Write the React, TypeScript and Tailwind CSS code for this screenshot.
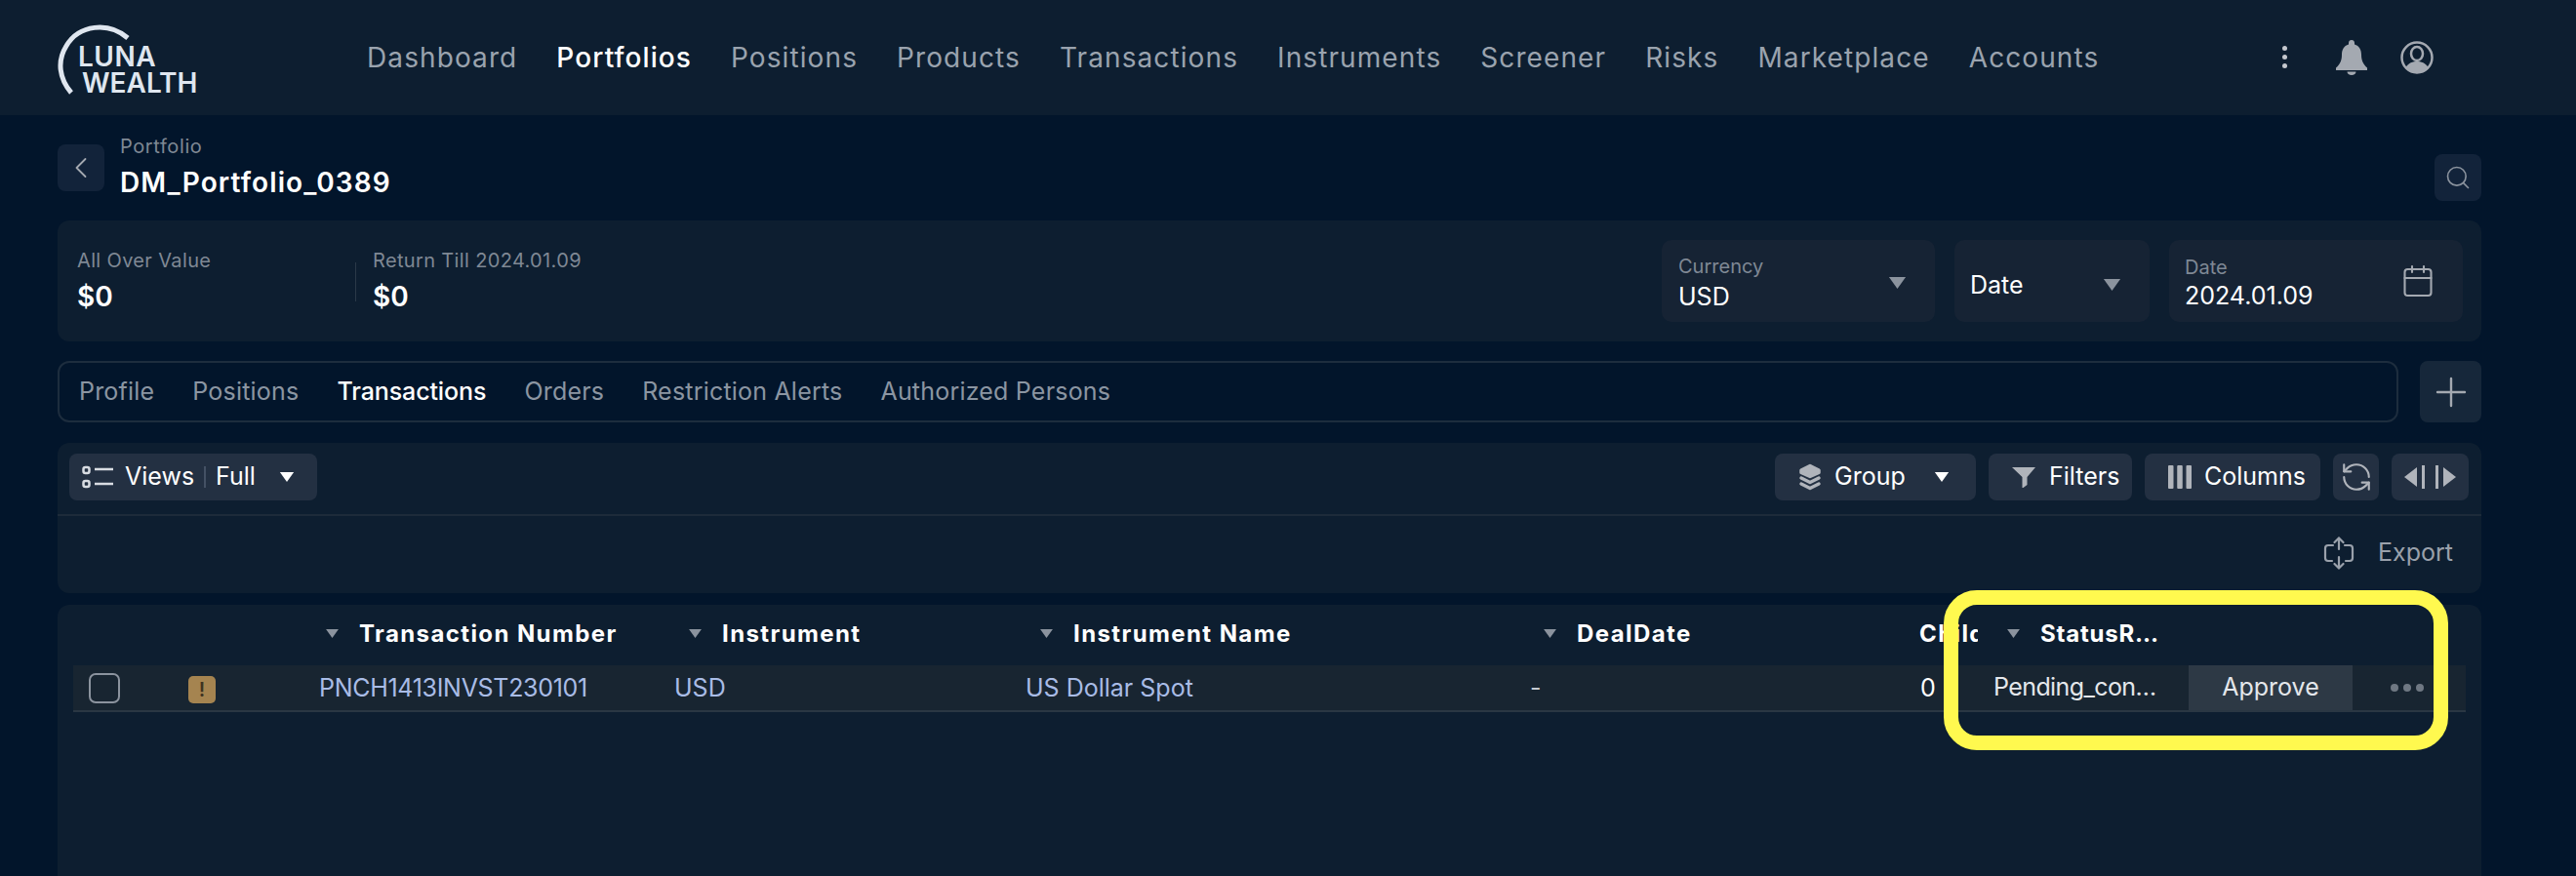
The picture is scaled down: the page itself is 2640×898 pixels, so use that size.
import { ChevronLeft, Search, Calendar, RefreshCcw, Plus } from "lucide-react";

const NAV = ["Dashboard", "Portfolios", "Positions", "Products", "Transactions", "Instruments", "Screener", "Risks", "Marketplace", "Accounts"];
const TABS = ["Profile", "Positions", "Transactions", "Orders", "Restriction Alerts", "Authorized Persons"];

const Caret = ({ className }: { className: string }) => (
  <svg viewBox="0 0 10 7" className={className} fill="currentColor">
    <path d="M0 0h10L5 7z" />
  </svg>
);

const Logo = () => (
  <div className="relative w-[150px] h-[80px] text-[#dfe6ef] font-semibold text-[28px] leading-[27px]">
    <svg viewBox="0 0 150 80" className="absolute left-0 top-0 w-[150px] h-[80px]" fill="none">
      <path d="M72 20C52 3 22 6 9 28C-1 44 2 62 14 76" stroke="#dfe6ef" strokeWidth="5" />
    </svg>
    <div className="pl-[21px] pt-[26px] tracking-[0.5px]">LUNA</div>
    <div className="pl-[25px]">WEALTH</div>
  </div>
);

const TopBar = () => (
  <header className="h-[118px] bg-[#0d1e30] flex items-center pl-[59px] pr-[146px] pb-[1px]">
    <div className="w-[317px] pt-[1px] shrink-0">
      <Logo />
    </div>
    <nav className="flex gap-[40px] text-[28px] tracking-[1.1px] text-[#9aa3ae]">
      {NAV.map((n) => (
        <span key={n} className={n === "Portfolios" ? "text-white font-medium" : ""}>
          {n}
        </span>
      ))}
    </nav>
    <div className="ml-auto flex items-center text-[#a4a9b1]">
      <div className="flex flex-col gap-[4px] mr-[49px]">
        <i className="w-[5px] h-[5px] rounded-full bg-[#c4c8ce]" />
        <i className="w-[5px] h-[5px] rounded-full bg-[#c4c8ce]" />
        <i className="w-[5px] h-[5px] rounded-full bg-[#c4c8ce]" />
      </div>
      <svg viewBox="0 0 34 36" className="w-[34px] h-[36px] mr-[33px]" fill="currentColor">
        <path d="M17 0c1.800 0 3 1.300 3 3v1.500c5 1.500 7 5.500 7 10.500 0 6 2 10 6 13.500V31H1v-2.500C5 25 7 21 7 15c0-5 2-9 7-10.500V3c0-1.700 1.200-3 3-3z" />
        <path d="M12.500 32.500h9c0 2-2 3.500-4.500 3.500s-4.500-1.500-4.500-3.500z" />
      </svg>
      <svg viewBox="0 0 34 34" className="w-[34px] h-[34px]" fill="none">
        <circle cx="17" cy="17" r="15.500" stroke="currentColor" strokeWidth="2.500" />
        <ellipse cx="17" cy="13" rx="6" ry="7" stroke="currentColor" strokeWidth="2.500" />
        <path d="M5 28c3-6 8-7 12-7s9 1 12 7c-3 3-7 5-12 5s-9-2-12-5z" fill="currentColor" />
      </svg>
    </div>
  </header>
);

const TitleRow = () => (
  <div className="h-[108px] flex items-start">
    <button className="mt-[30px] w-[48px] h-[48px] rounded-[8px] bg-[#12233a] flex items-center justify-center text-[#a4a9b1]">
      <ChevronLeft size={36} strokeWidth={1.2} />
    </button>
    <div className="ml-[16px] mt-[19px]">
      <div className="text-[20px] leading-[26px] tracking-[0.6px] text-[#7f8894]">Portfolio</div>
      <div className="text-[28px] leading-[36px] mt-[6px] font-semibold tracking-[1.1px] text-white">DM_Portfolio_0389</div>
    </div>
    <button className="ml-auto mt-[40px] w-[48px] h-[48px] rounded-[8px] bg-[#12233a] flex items-center justify-center text-[#8b939e]">
      <Search size={28} strokeWidth={1.4} />
    </button>
  </div>
);

const StatsPanel = () => (
  <section className="h-[124px] rounded-[12px] bg-[#0d1e30] flex items-center pl-[20px] pr-[19px]">
    <div className="w-[285px]">
      <div className="text-[20px] leading-[26px] tracking-[0.35px] text-[#7f8894]">All Over Value</div>
      <div className="text-[28px] leading-[36px] mt-[6px] font-semibold text-white">$0</div>
    </div>
    <div className="w-[1px] h-[40px] bg-[#2a3948] mr-[17px] mt-[2px]" />
    <div>
      <div className="text-[20px] leading-[26px] tracking-[0.35px] text-[#7f8894]">Return Till 2024.01.09</div>
      <div className="text-[28px] leading-[36px] mt-[6px] font-semibold text-white">$0</div>
    </div>
    <div className="ml-auto flex gap-[20px]">
      <div className="w-[280px] h-[84px] rounded-[10px] bg-[#162334] flex items-center pl-[17px] pr-[29px]">
        <div className="pt-[3px]">
          <div className="text-[20px] leading-[26px] text-[#7f8894]">Currency</div>
          <div className="text-[25px] leading-[32px] mt-[2px] text-white">USD</div>
        </div>
        <Caret className="ml-auto mt-[3px] w-[19px] h-[12px] text-[#8b939e]" />
      </div>
      <div className="w-[200px] h-[84px] rounded-[10px] bg-[#162334] flex items-center pl-[16px] pr-[29px]">
        <div className="text-[25px] pt-[10px] text-white">Date</div>
        <Caret className="ml-auto mt-[7px] w-[19px] h-[12px] text-[#8b939e]" />
      </div>
      <div className="w-[301px] h-[84px] rounded-[10px] bg-[#162334] flex items-center pl-[16px] pr-[28px]">
        <div className="pt-[4px]">
          <div className="text-[20px] leading-[26px] text-[#7f8894]">Date</div>
          <div className="text-[25px] leading-[32px] text-white">2024.01.09</div>
        </div>
        <Calendar className="ml-auto text-[#a4a9b1]" size={36} strokeWidth={1.4} />
      </div>
    </div>
  </section>
);

const TabsRow = () => (
  <div className="mt-[20px] h-[63px] flex gap-[22px]">
    <div className="flex-1 rounded-[12px] border-2 border-[#1d2d3e] flex items-center gap-[39px] pl-[20px] text-[25px] tracking-[0.2px] text-[#8b95a2]">
      {TABS.map((t) => (
        <span key={t} className={t === "Transactions" ? "text-white font-medium tracking-[-0.1px]" : ""}>
          {t}
        </span>
      ))}
    </div>
    <button className="w-[63px] rounded-[8px] bg-[#16273a] flex items-center justify-center text-[#a4a9b1]">
      <Plus size={48} strokeWidth={1.2} />
    </button>
  </div>
);

const ToolBtn = ({ children, className }: { children: React.ReactNode; className: string }) => (
  <button className={`h-[48px] rounded-[8px] bg-[#233042] flex items-center text-[25px] text-white ${className}`}>{children}</button>
);

const Toolbar = () => (
  <section className="mt-[21px] h-[154px] rounded-[12px] bg-[#0d1e30]">
    <div className="h-[75px] border-b-2 border-[#1d2b3a] flex items-center pl-[12px] pr-[13px] pb-[3px]">
      <ToolBtn className="w-[254px] pl-[13px]">
        <svg viewBox="0 0 32 24" className="w-[32px] h-[24px] text-[#d8dce2] mr-[12px]" fill="none" stroke="currentColor" strokeWidth="2.500">
          <rect x="1.500" y="2" width="6" height="6" rx="2" />
          <rect x="1.500" y="16" width="6" height="6" rx="2" />
          <path d="M13 4h19M13 19h19" />
        </svg>
        <span>Views</span>
        <i className="w-[2px] h-[22px] bg-[#445164] mx-[10px]" />
        <span>Full</span>
        <Caret className="ml-[24px] w-[16px] h-[10px] text-white" />
      </ToolBtn>
      <ToolBtn className="ml-auto w-[206px] pl-[24px]">
        <svg viewBox="0 0 24 28" className="w-[24px] h-[28px] text-[#b0b4bb] mr-[13px]" fill="none" stroke="currentColor" strokeWidth="3.500" strokeLinecap="round" strokeLinejoin="round">
          <path d="M12 2.500l9 4.500v2.500l-9 4-9-4V7z" fill="currentColor" />
          <path d="M3 15l9 4.500 9-4.500" />
          <path d="M3 21l9 4.500 9-4.500" />
        </svg>
        <span>Group</span>
        <Caret className="ml-[29px] w-[16px] h-[10px] text-white" />
      </ToolBtn>
      <ToolBtn className="ml-[13px] w-[147px] pl-[24px]">
        <svg viewBox="0 0 24 21" className="w-[24px] h-[21px] text-[#b0b4bb] mr-[14px]" fill="currentColor">
          <path d="M0 0h24L15.500 10v8l-4 3h-1V10z" />
        </svg>
        <span>Filters</span>
      </ToolBtn>
      <ToolBtn className="ml-[13px] w-[180px] pl-[24px]">
        <svg viewBox="0 0 24 24" className="w-[24px] h-[24px] text-[#b0b4bb] mr-[13px]" fill="currentColor">
          <rect x="0" width="5.500" height="24" rx="1" />
          <rect x="9.250" width="5.500" height="24" rx="1" />
          <rect x="18.500" width="5.500" height="24" rx="1" />
        </svg>
        <span>Columns</span>
      </ToolBtn>
      <ToolBtn className="ml-[13px] w-[47px] justify-center">
        <RefreshCcw size={34} strokeWidth={1.5} className="text-[#b0b4bb]" />
      </ToolBtn>
      <ToolBtn className="ml-[13px] w-[79px] justify-center">
        <svg viewBox="0 0 53 24" className="w-[53px] h-[24px] text-[#b0b4bb]" fill="currentColor">
          <path d="M13 2v20L0 12z" />
          <rect x="18" width="3" height="24" />
          <rect x="32" width="3" height="24" />
          <path d="M40 2v20l13-10z" />
        </svg>
      </ToolBtn>
    </div>
    <div className="h-[76px] flex items-center justify-end pr-[29px] text-[#9aa1ab] text-[25px]">
      <svg viewBox="0 0 32 34" className="w-[32px] h-[34px] mr-[24px]" fill="none" stroke="currentColor" strokeWidth="2.200" strokeLinecap="round">
        <path d="M16 13V1.500M11.500 6L16 1.500 20.500 6M16 21v11.500M11.500 28l4.500 4.500 4.500-4.500" />
        <path d="M10 9H5a3 3 0 0 0-3 3v10a3 3 0 0 0 3 3h4M22 9h5a3 3 0 0 1 3 3v10a3 3 0 0 1-3 3h-4" />
      </svg>
      <span>Export</span>
    </div>
  </section>
);

const HeadCell = ({ label, className }: { label: string; className: string }) => (
  <div className={`shrink-0 flex items-center ${className}`}>
    <Caret className="w-[13px] h-[9px] mr-[21px] text-[#8b939e] shrink-0" />
    <span>{label}</span>
  </div>
);

const DataTable = () => (
  <section className="mt-[12px] flex-1 rounded-t-[12px] bg-[#0d1e30] pl-[16px] pr-[16px]">
    <div className="h-[62px] pb-[3px] flex items-center text-[24px] font-bold tracking-[1.4px] text-white">
      <div className="w-[243px] shrink-0" />
      <HeadCell label="Transaction Number" className="w-[372px] pl-[16px]" />
      <HeadCell label="Instrument" className="w-[362px] pl-[16px]" />
      <HeadCell label="Instrument Name" className="w-[514px] pl-[14px]" />
      <HeadCell label="DealDate" className="w-[401px] pl-[16px]" />
      <div className="w-[60px] shrink-0 overflow-hidden whitespace-nowrap">Child</div>
      <HeadCell label="StatusR…" className="pl-[30px] tracking-[0.8px]" />
    </div>
    <div className="h-[48px] flex items-center bg-[#182531] border-b-2 border-[#2a3743] text-[25px] text-[#a9bce6]">
      <div className="w-[118px] shrink-0 pl-[16px]">
        <div className="w-[32px] h-[31px] rounded-[7px] border-2 border-[#8b939e]" />
      </div>
      <div className="w-[134px] shrink-0">
        <div className="w-[28px] h-[28px] mt-[4px] rounded-[5px] bg-[#a58450] flex items-center justify-center text-[20px] font-semibold leading-none text-[#3d3320]">!</div>
      </div>
      <div className="w-[364px] shrink-0 pt-[1px] tracking-[-0.3px]">PNCH1413INVST230101</div>
      <div className="w-[360px] shrink-0 pt-[1px]">USD</div>
      <div className="w-[517px] shrink-0 pt-[1px]">US Dollar Spot</div>
      <div className="w-[400px] shrink-0 pt-[1px] text-[#c6cbd2]">-</div>
      <div className="w-[58px] shrink-0 pt-[1px] text-white">0</div>
      <div className="w-[217px] shrink-0 h-full flex items-center pl-[17px] tracking-[-0.6px] text-[#e4e7eb]">Pending_con…</div>
      <div className="w-[168px] shrink-0 h-full flex items-center justify-center bg-[#2d3945] text-[#e4e7eb]">Approve</div>
      <div className="flex-1 flex justify-end gap-[5px] pr-[43px]">
        <i className="w-[8px] h-[8px] rounded-full bg-[#6f7883]" />
        <i className="w-[8px] h-[8px] rounded-full bg-[#6f7883]" />
        <i className="w-[8px] h-[8px] rounded-full bg-[#6f7883]" />
      </div>
    </div>
  </section>
);

export default function App() {
  return (
    <div className="relative h-[898px] w-[2640px] overflow-hidden bg-[#02152b] flex flex-col font-['Inter',sans-serif]">
      <TopBar />
      <main className="flex-1 flex flex-col pl-[59px] pr-[97px]">
        <TitleRow />
        <StatsPanel />
        <TabsRow />
        <Toolbar />
        <DataTable />
      </main>
      {/* highlight drawn over the screenshot */}
      <div className="absolute left-[1992px] top-[605px] w-[517px] h-[164px] rounded-[34px] border-[15px] border-[#fff94f]" />
    </div>
  );
}
